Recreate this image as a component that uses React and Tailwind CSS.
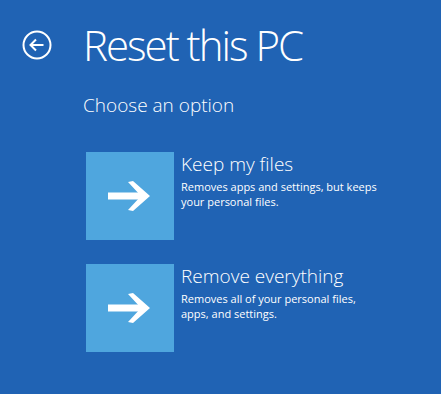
function Arrow() {
  return (
    <svg width="44" height="30" viewBox="0 0 44 30">
      <path d="M0 11.5h34v7H0z" fill="#fff" />
      <path d="M20 1l5-1 17 15-17 15-5-1 13-14z" fill="#fff" />
    </svg>
  );
}

function Option({ title, desc }) {
  return (
    <div className="flex items-start gap-[7px]">
      <div className="w-[88px] h-[88px] bg-[#4fa6de] flex items-center justify-center shrink-0">
        <Arrow />
      </div>
      <div className="text-white pt-[1px]">
        <div className="text-[19px] leading-[22px] font-light">{title}</div>
        <div className="text-[11px] leading-[15px] mt-[4px] w-[198px]">{desc}</div>
      </div>
    </div>
  );
}

export default function App() {
  return (
    <div
      className="w-[441px] h-[394px] bg-[#2063b4] text-white"
      style={{ fontFamily: "'Open Sans', 'Noto Sans', sans-serif" }}
    >
      <div className="flex items-center pt-[19px] pl-[22px]">
        <svg width="30" height="30" viewBox="0 0 30 30" className="shrink-0">
          <circle cx="15" cy="15" r="13.5" fill="none" stroke="#fff" strokeWidth="2" />
          <path d="M8.5 15h13M14 9.5L8.5 15l5.5 5.5" fill="none" stroke="#fff" strokeWidth="2" />
        </svg>
        <h1 className="ml-[31px] text-[42px] leading-[52px] font-light tracking-[-2px]">Reset this PC</h1>
      </div>
      <div className="pl-[83px] mt-[21px] text-[19px] leading-[26px] font-light">Choose an option</div>
      <div className="pl-[86px] mt-[34px] flex flex-col gap-[24px]">
        <Option title="Keep my files" desc="Removes apps and settings, but keeps your personal files." />
        <Option title="Remove everything" desc="Removes all of your personal files, apps, and settings." />
      </div>
    </div>
  );
}
